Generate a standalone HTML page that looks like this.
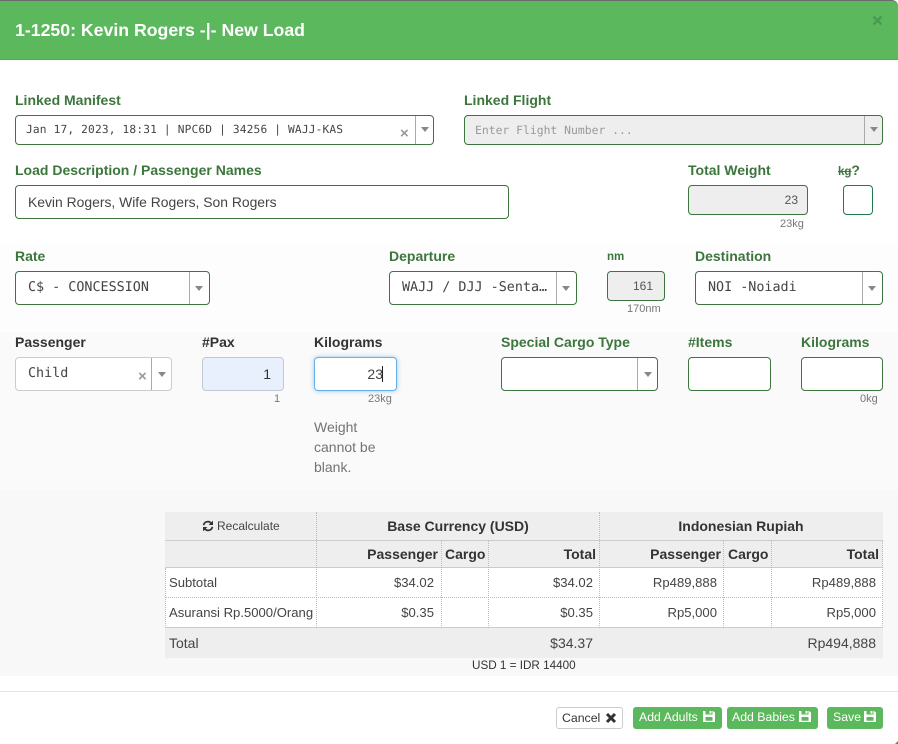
<!DOCTYPE html>
<html><head><meta charset="utf-8">
<style>
html,body{margin:0;padding:0;width:898px;height:744px;overflow:hidden;background:#fff;font-family:"Liberation Sans",sans-serif;color:#333}
.a{position:absolute;white-space:nowrap}
.l{position:absolute;white-space:nowrap;font-weight:bold;font-size:14px;line-height:16px;color:#3c763d}
.d{color:#333}
.b{position:absolute;box-sizing:border-box;border:1px solid #3c763d;border-radius:4px;background:#fff}
.g{background:#eee}
.m{position:absolute;white-space:nowrap;font-family:"DejaVu Sans Mono","Liberation Mono",monospace;color:#444;text-rendering:geometricPrecision}
.div{position:absolute;top:0;bottom:0;width:1px;background:#aaa}
.car{position:absolute;width:0;height:0;border-left:4px solid transparent;border-right:4px solid transparent;border-top:5px solid #888}
.n{position:absolute;white-space:nowrap;font-size:12px;line-height:14px;color:#555;text-align:right}
.h{position:absolute;font-size:11px;line-height:12px;color:#777;white-space:nowrap}
.x{position:absolute;font-size:15px;font-weight:bold;color:#999;line-height:15px}
.t{position:absolute;white-space:nowrap;font-size:13.1px;line-height:16px;color:#444}
.r{text-align:right}
.th{font-weight:bold;font-size:14px;color:#333}
.v{position:absolute;width:0;border-left:1px dotted #bbb}
.hl{position:absolute;height:0}
.btn{position:absolute;box-sizing:border-box;top:707px;height:22px;border-radius:3px;font-size:12.3px;line-height:21px;white-space:nowrap;padding-left:6px}
.gr{background:#5cb85c;color:#fff}
svg{position:absolute}
</style></head><body>
<svg width="0" height="0" style="position:absolute"><defs><symbol id="s" viewBox="0 0 12 11"><path fill="#fff" fill-rule="evenodd" d="M0 0h2.500v3.500h7V0h.5L12 1.500V11H0zM2.500 6v3.800h7V6zM6.500 0h2v2.500h-2z"/></symbol></defs></svg>

<!-- header -->
<div class="a" style="left:0;top:0;width:898px;height:60px;background:#5cb85c;border-top:1px solid #6a6a6a;box-sizing:border-box;border-bottom:1px solid #55ab55;border-radius:0 6px 0 0"></div>
<div class="a" style="left:15px;top:19px;font-size:17.7px;line-height:22px;font-weight:bold;color:#fff">1-1250: Kevin Rogers -|- New Load</div>
<svg style="left:872px;top:15px" width="11" height="11" viewBox="0 0 11 11"><path d="M1.500 1.500l8 8M9.500 1.500l-8 8" stroke="#4a9a52" stroke-width="2.300"/></svg>

<!-- section backgrounds -->
<div class="a" style="left:0;top:245px;width:898px;height:87px;background:#fdfdfd"></div>
<div class="a" style="left:0;top:332px;width:898px;height:158px;background:#fafafa"></div>
<div class="a" style="left:0;top:490px;width:898px;height:186px;background:#f8f8f8"></div>

<!-- row 1 -->
<div class="l" style="left:15px;top:92px">Linked Manifest</div>
<div class="b" style="left:15px;top:115px;width:419px;height:30px"><div class="div" style="left:399px"></div><div class="car" style="left:405px;top:11px"></div></div>
<div class="m" style="left:26px;top:123px;font-size:11.2px;letter-spacing:.16px;line-height:14px">Jan 17, 2023, 18:31 | NPC6D | 34256 | WAJJ-KAS</div>
<div class="x" style="left:400px;top:126px">×</div>

<div class="l" style="left:464px;top:92px">Linked Flight</div>
<div class="b g" style="left:464px;top:115px;width:419px;height:30px"><div class="div" style="left:399px"></div><div class="car" style="left:405px;top:11px"></div></div>
<div class="m" style="left:475px;top:123px;font-size:11.4px;line-height:14px;color:#999">Enter Flight Number ...</div>

<!-- row 2 -->
<div class="l" style="left:15px;top:162px">Load Description / Passenger Names</div>
<div class="b" style="left:15px;top:185px;width:494px;height:34px"></div>
<div class="a" style="left:28px;top:194px;font-size:13.9px;line-height:16px;color:#444">Kevin Rogers, Wife Rogers, Son Rogers</div>

<div class="l" style="left:688px;top:162px">Total Weight</div>
<div class="b g" style="left:688px;top:185px;width:120px;height:30px"></div>
<div class="n" style="left:760px;width:38px;top:193px">23</div>
<div class="h" style="left:780px;top:218px">23kg</div>
<div class="l" style="left:838px;top:162px;font-size:11.5px;color:#3c763d"><s>kg</s><span style="font-size:14px">?</span></div>
<div class="b" style="left:843px;top:185px;width:30px;height:30px;border-color:#1f7a4d"></div>

<!-- row 3 -->
<div class="l" style="left:15px;top:248px">Rate</div>
<div class="b" style="left:15px;top:271px;width:195px;height:34px"><div class="div" style="left:173px"></div><div class="car" style="left:179px;top:14px"></div></div>
<div class="m" style="left:28px;top:280px;font-size:13.4px;line-height:16px">C$ - CONCESSION</div>

<div class="l" style="left:389px;top:248px">Departure</div>
<div class="b" style="left:389px;top:271px;width:188px;height:34px"><div class="div" style="left:166px"></div><div class="car" style="left:172px;top:14px"></div></div>
<div class="m" style="left:402px;top:280px;font-size:13.4px;line-height:16px">WAJJ / DJJ -Senta…</div>

<div class="l" style="left:607px;top:250px;font-size:11.5px;line-height:14px">nm</div>
<div class="b g" style="left:607px;top:271px;width:58px;height:30px"></div>
<div class="n" style="left:620px;width:33px;top:279px">161</div>
<div class="h" style="left:627px;top:303px">170nm</div>

<div class="l" style="left:695px;top:248px">Destination</div>
<div class="b" style="left:695px;top:271px;width:188px;height:34px"><div class="div" style="left:166px"></div><div class="car" style="left:172px;top:14px"></div></div>
<div class="m" style="left:708px;top:280px;font-size:13.4px;line-height:16px">NOI -Noiadi</div>

<!-- row 4 -->
<div class="l d" style="left:15px;top:334px">Passenger</div>
<div class="b" style="left:15px;top:357px;width:157px;height:34px;border-color:#ccc"><div class="div" style="left:135px"></div><div class="car" style="left:142px;top:14px"></div></div>
<div class="m" style="left:28px;top:366px;font-size:13.4px;line-height:16px">Child</div>
<div class="x" style="left:138px;top:369px">×</div>

<div class="l d" style="left:202px;top:334px">#Pax</div>
<div class="b" style="left:202px;top:357px;width:82px;height:34px;border-color:#c4c8ce;background:#e8f0fe"></div>
<div class="a" style="left:240px;width:31px;top:366px;text-align:right;font-size:14px;line-height:16px;color:#333">1</div>
<div class="h" style="left:274px;top:393px">1</div>

<div class="l d" style="left:314px;top:334px">Kilograms</div>
<div class="b" style="left:314px;top:357px;width:83px;height:34px;border-color:#66afe9;box-shadow:0 0 5px rgba(102,175,233,.7)"></div>
<div class="a" style="left:350px;width:33px;top:366px;text-align:right;font-size:14px;line-height:16px;color:#444">23</div>
<div class="a" style="left:382px;top:366px;width:1px;height:16px;background:#222"></div>
<div class="h" style="left:368px;top:393px">23kg</div>
<div class="a" style="left:314px;top:417px;font-size:14px;line-height:20px;color:#737373">Weight<br>cannot be<br>blank.</div>

<div class="l" style="left:501px;top:334px">Special Cargo Type</div>
<div class="b" style="left:501px;top:357px;width:157px;height:34px"><div class="div" style="left:135px"></div><div class="car" style="left:142px;top:14px"></div></div>

<div class="l" style="left:688px;top:334px">#Items</div>
<div class="b" style="left:688px;top:357px;width:83px;height:34px"></div>

<div class="l" style="left:801px;top:334px">Kilograms</div>
<div class="b" style="left:801px;top:357px;width:82px;height:34px"></div>
<div class="h" style="left:860px;top:393px">0kg</div>

<!-- table -->
<div class="a" style="left:165px;top:512px;width:718px;height:56px;background:#eee"></div>
<div class="a" style="left:165px;top:568px;width:718px;height:60px;background:#fff"></div>
<div class="a" style="left:165px;top:628px;width:718px;height:30px;background:#eee"></div>
<div class="hl" style="left:165px;top:540px;width:718px;border-top:1px solid #ccc"></div>
<div class="hl" style="left:165px;top:567px;width:718px;border-top:1px solid #ccc"></div>
<div class="hl" style="left:165px;top:597px;width:718px;border-top:1px dotted #bbb"></div>
<div class="hl" style="left:165px;top:627px;width:718px;border-top:1px solid #ccc"></div>
<div class="v" style="left:165px;top:568px;height:60px"></div>
<div class="v" style="left:882px;top:541px;height:87px"></div>
<div class="v" style="left:316px;top:512px;height:116px"></div>
<div class="v" style="left:599px;top:512px;height:116px"></div>
<div class="v" style="left:441px;top:541px;height:87px"></div>
<div class="v" style="left:488px;top:541px;height:87px"></div>
<div class="v" style="left:723px;top:541px;height:87px"></div>
<div class="v" style="left:771px;top:541px;height:87px"></div>

<svg style="left:202px;top:520px" width="12" height="12" viewBox="0 0 12 12"><path fill="none" stroke="#333" stroke-width="1.700" d="M1.600 5.200A4.300 4.300 0 0 1 9 3M10.400 6.800A4.300 4.300 0 0 1 3 9"/><path fill="#333" d="M11 .6V5H6.600zM1 11.400V7h4.400z"/></svg>
<div class="a" style="left:217px;top:519px;font-size:12px;line-height:14px;color:#444">Recalculate</div>
<div class="a th" style="left:317px;width:282px;top:518px;text-align:center;font-size:14px;line-height:16px">Base Currency (USD)</div>
<div class="a th" style="left:600px;width:282px;top:518px;text-align:center;font-size:14px;line-height:16px">Indonesian Rupiah</div>

<div class="t th r" style="left:340px;width:98px;top:546px;font-size:14px">Passenger</div>
<div class="t th" style="left:445px;top:546px;font-size:14px">Cargo</div>
<div class="t th r" style="left:530px;width:66px;top:546px;font-size:14px">Total</div>
<div class="t th r" style="left:620px;width:101px;top:546px;font-size:14px">Passenger</div>
<div class="t th" style="left:728px;top:546px;font-size:14px">Cargo</div>
<div class="t th r" style="left:810px;width:69px;top:546px;font-size:14px">Total</div>

<div class="t" style="left:169px;top:575px">Subtotal</div>
<div class="t r" style="left:340px;width:94px;top:575px">$34.02</div>
<div class="t r" style="left:520px;width:73px;top:575px">$34.02</div>
<div class="t r" style="left:620px;width:97px;top:575px">Rp489,888</div>
<div class="t r" style="left:790px;width:86px;top:575px">Rp489,888</div>

<div class="t" style="left:169px;top:605px">Asuransi Rp.5000/Orang</div>
<div class="t r" style="left:340px;width:94px;top:605px">$0.35</div>
<div class="t r" style="left:520px;width:73px;top:605px">$0.35</div>
<div class="t r" style="left:620px;width:97px;top:605px">Rp5,000</div>
<div class="t r" style="left:790px;width:86px;top:605px">Rp5,000</div>

<div class="t" style="left:169px;top:635px;font-size:14px">Total</div>
<div class="t r" style="left:520px;width:73px;top:635px;font-size:14px">$34.37</div>
<div class="t r" style="left:780px;width:96px;top:635px;font-size:14px">Rp494,888</div>
<div class="a" style="left:472px;top:659px;font-size:11.7px;line-height:14px;color:#333">USD 1 = IDR 14400</div>

<!-- footer -->
<div class="a" style="left:0;top:691px;width:898px;height:1px;background:#e5e5e5"></div>
<div class="btn" style="left:556px;width:67px;border:1px solid #ccc;background:#fff;color:#333;line-height:20px;padding-left:5px">Cancel</div>
<svg style="left:605px;top:712px" width="12" height="12" viewBox="0 0 12 12"><path d="M2 2l8 8M10 2l-8 8" stroke="#333" stroke-width="3"/></svg>
<div class="btn gr" style="left:633px;width:89px">Add Adults</div>
<svg style="left:703px;top:711px" width="12" height="11"><use href="#s"/></svg>
<div class="btn gr" style="left:727px;width:91px;padding-left:5px">Add Babies</div>
<svg style="left:799px;top:711px" width="12" height="11"><use href="#s"/></svg>
<div class="btn gr" style="left:827px;width:56px">Save</div>
<svg style="left:864px;top:711px" width="12" height="11"><use href="#s"/></svg>
<svg style="left:895px;top:741px" width="3" height="3" viewBox="0 0 3 3"><path d="M3 0v3H0z" fill="#777"/></svg>
</body></html>
